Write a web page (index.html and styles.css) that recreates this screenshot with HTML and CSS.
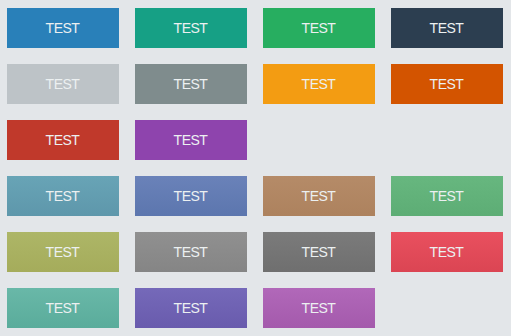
FILE: index.html
```html
<html>
    <head>
        <link rel="stylesheet" href="styles.css">
    </head>
    <body>
        <div class="board">
            <div class="row">
                <button class="btn belize">TEST</button>
                <button class="btn sea">TEST</button>
                <button class="btn nephritis">TEST</button>
                <button class="btn midnight">TEST</button>
            </div>
            <div class="row">
                <button class="btn silver">TEST</button>
                <button class="btn asbestos">TEST</button>
                <button class="btn orange">TEST</button>
                <button class="btn pumpkin">TEST</button>
            </div>
            <div class="row">
                <button class="btn pomegranate">TEST</button>
                <button class="btn wisteria">TEST</button>
            </div>
            <div class="row">
                <button class="btn g-teal">TEST</button>
                <button class="btn g-blue">TEST</button>
                <button class="btn g-brown">TEST</button>
                <button class="btn g-green">TEST</button>
            </div>
            <div class="row">
                <button class="btn g-olive">TEST</button>
                <button class="btn g-grey">TEST</button>
                <button class="btn g-dark">TEST</button>
                <button class="btn g-red">TEST</button>
            </div>
            <div class="row">
                <button class="btn g-mint">TEST</button>
                <button class="btn g-violet">TEST</button>
                <button class="btn g-pink">TEST</button>
            </div>
        </div>
    </body>
</html>
```
FILE: styles.css
```css
html{
    background-color: #e3e6e9;
}
body{
    margin: 0;
    padding: 8px 7px;
    font-family: "Liberation Sans", Arial, sans-serif;
}
.board{
    display: flex;
    flex-direction: column;
    gap: 16px;
}
.row{
    display: flex;
    gap: 16px;
}
.btn{
    width: 112px;
    height: 40px;
    border: none;
    padding: 0;
    font-family: inherit;
    font-size: 14px;
    letter-spacing: -0.5px;
    text-indent: -1px;
    color: #ecf0f1;
    background-color: #888;
}
.belize{ background-color: #2980b9; }
.sea{ background-color: #16a085; }
.nephritis{ background-color: #27ae60; }
.midnight{ background-color: #2c3e50; }
.silver{ background-color: #bdc3c7; }
.asbestos{ background-color: #7f8c8d; }
.orange{ background-color: #f39c12; }
.pumpkin{ background-color: #d35400; }
.pomegranate{ background-color: #c0392b; }
.wisteria{ background-color: #8e44ad; }
.g-teal{ background: linear-gradient(#68a4b6, #5e97ab); }
.g-blue{ background: linear-gradient(#6a82b9, #5c76ae); }
.g-brown{ background: linear-gradient(#b58b68, #ad825e); }
.g-green{ background: linear-gradient(#67b77f, #5dad75); }
.g-olive{ background: linear-gradient(#adb667, #a5ac5b); }
.g-grey{ background: linear-gradient(#909090, #858585); }
.g-dark{ background: linear-gradient(#7b7b7b, #6f6f6f); }
.g-red{ background: linear-gradient(#e9505f, #db4553); }
.g-mint{ background: linear-gradient(#69b8a8, #5aac9b); }
.g-violet{ background: linear-gradient(#7569b9, #695bad); }
.g-pink{ background: linear-gradient(#b168b9, #a45aac); }
```
